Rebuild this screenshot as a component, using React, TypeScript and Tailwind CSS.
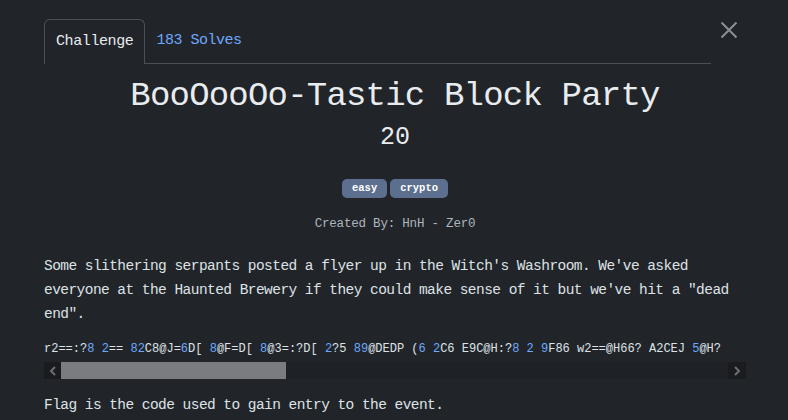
const mono = "font-['Liberation_Mono','DejaVu_Sans_Mono',monospace]";

const codeParts: [string, boolean][] = [
  ['r2==:?', false],
  ['8', true],
  [' ', false],
  ['2', true],
  ['== ', false],
  ['82', true],
  ['C8@J=', false],
  ['6', true],
  ['D[ ', false],
  ['8', true],
  ['@F=D[ ', false],
  ['8', true],
  ['@3=:?D[ ', false],
  ['2', true],
  ['?5 ', false],
  ['89', true],
  ['@DEDP (', false],
  ['6', true],
  [' ', false],
  ['2', true],
  ['C6 E9C@H:?', false],
  ['8', true],
  [' ', false],
  ['2', true],
  [' ', false],
  ['9', true],
  ['F86 w2==@H66? A2CEJ ', false],
  ['5', true],
  ['@H?', false],
];

const CloseIcon = () => (
  <svg width="18" height="18" viewBox="0 0 18 18" fill="none">
    <path d="M1.5 1.5 L16.5 16.5 M16.5 1.5 L1.5 16.5" stroke="#8b8e92" strokeWidth="2" />
  </svg>
);

const Badge = ({ label }: { label: string }) => (
  <span className="flex h-[19px] items-center rounded-[5px] bg-[#5c6f8f] px-[10px] text-[10.5px] font-bold text-white">
    {label}
  </span>
);

export default function App() {
  return (
    <div className={`h-[420px] w-full overflow-hidden bg-[#212529] pl-[44px] pr-[42px] pt-[19px] text-[#dee2e6] ${mono}`}>
      <div className="flex">
        <div className="flex h-[45px] flex-1 border-b border-[#495057]">
          <div className="-mb-px flex h-[45px] items-center rounded-t-[6px] border border-b-0 border-[#495057] bg-[#212529] px-[11px] text-[15px] tracking-[-0.4px] text-[#e9ecef]">
            Challenge
          </div>
          <div className="flex h-[44px] items-center px-[11px] text-[15px] tracking-[-0.5px] text-[#6ea8fe]">
            183 Solves
          </div>
        </div>
        <div className="flex w-[35px] justify-center pt-[2px]">
          <CloseIcon />
        </div>
      </div>

      <h2 className="mt-[12px] text-center text-[34px] leading-[40px] tracking-[-0.8px] text-[#e9ecef]">
        BooOooOo-Tastic Block Party
      </h2>
      <div className="mt-[6px] text-center text-[25px] leading-[32px] text-[#e9ecef]">20</div>

      <div className="mt-[25px] flex justify-center gap-[3px]">
        <Badge label="easy" />
        <Badge label="crypto" />
      </div>

      <div className="mt-[16px] text-center text-[12.5px] leading-[20px] tracking-[-0.2px] text-[#adb5bd]">
        Created By: HnH - Zer0
      </div>

      <p className="mt-[20px] text-[14.5px] leading-[24px] tracking-[-0.55px]">
        Some slithering serpants posted a flyer up in the Witch's Washroom. We've asked everyone at the
        Haunted Brewery if they could make sense of it but we've hit a "dead end".
      </p>

      <div className="mt-[13px]">
        <div className="overflow-hidden whitespace-pre text-[12px] leading-[20px]">
          {codeParts.map(([text, num], i) => (
            <span key={i} className={num ? 'text-[#6ea8fe]' : ''}>
              {text}
            </span>
          ))}
        </div>
        <div className="mt-[3px] flex h-[17px] bg-[#1e2125]">
          <div className="flex w-[17px] items-center justify-center bg-[#191b1e]">
            <svg width="8" height="10" viewBox="0 0 8 10">
              <path d="M6 1 L2 5 L6 9" stroke="#6b6e72" strokeWidth="2" fill="none" />
            </svg>
          </div>
          <div className="w-[225px] bg-[#7b7c80]" />
          <div className="flex-1" />
          <div className="flex w-[18px] items-center justify-center bg-[#191b1e]">
            <svg width="8" height="10" viewBox="0 0 8 10">
              <path d="M2 1 L6 5 L2 9" stroke="#6b6e72" strokeWidth="2" fill="none" />
            </svg>
          </div>
        </div>
      </div>

      <p className="mt-[14px] text-[14.5px] leading-[24px] tracking-[-0.55px]">
        Flag is the code used to gain entry to the event.
      </p>
    </div>
  );
}
